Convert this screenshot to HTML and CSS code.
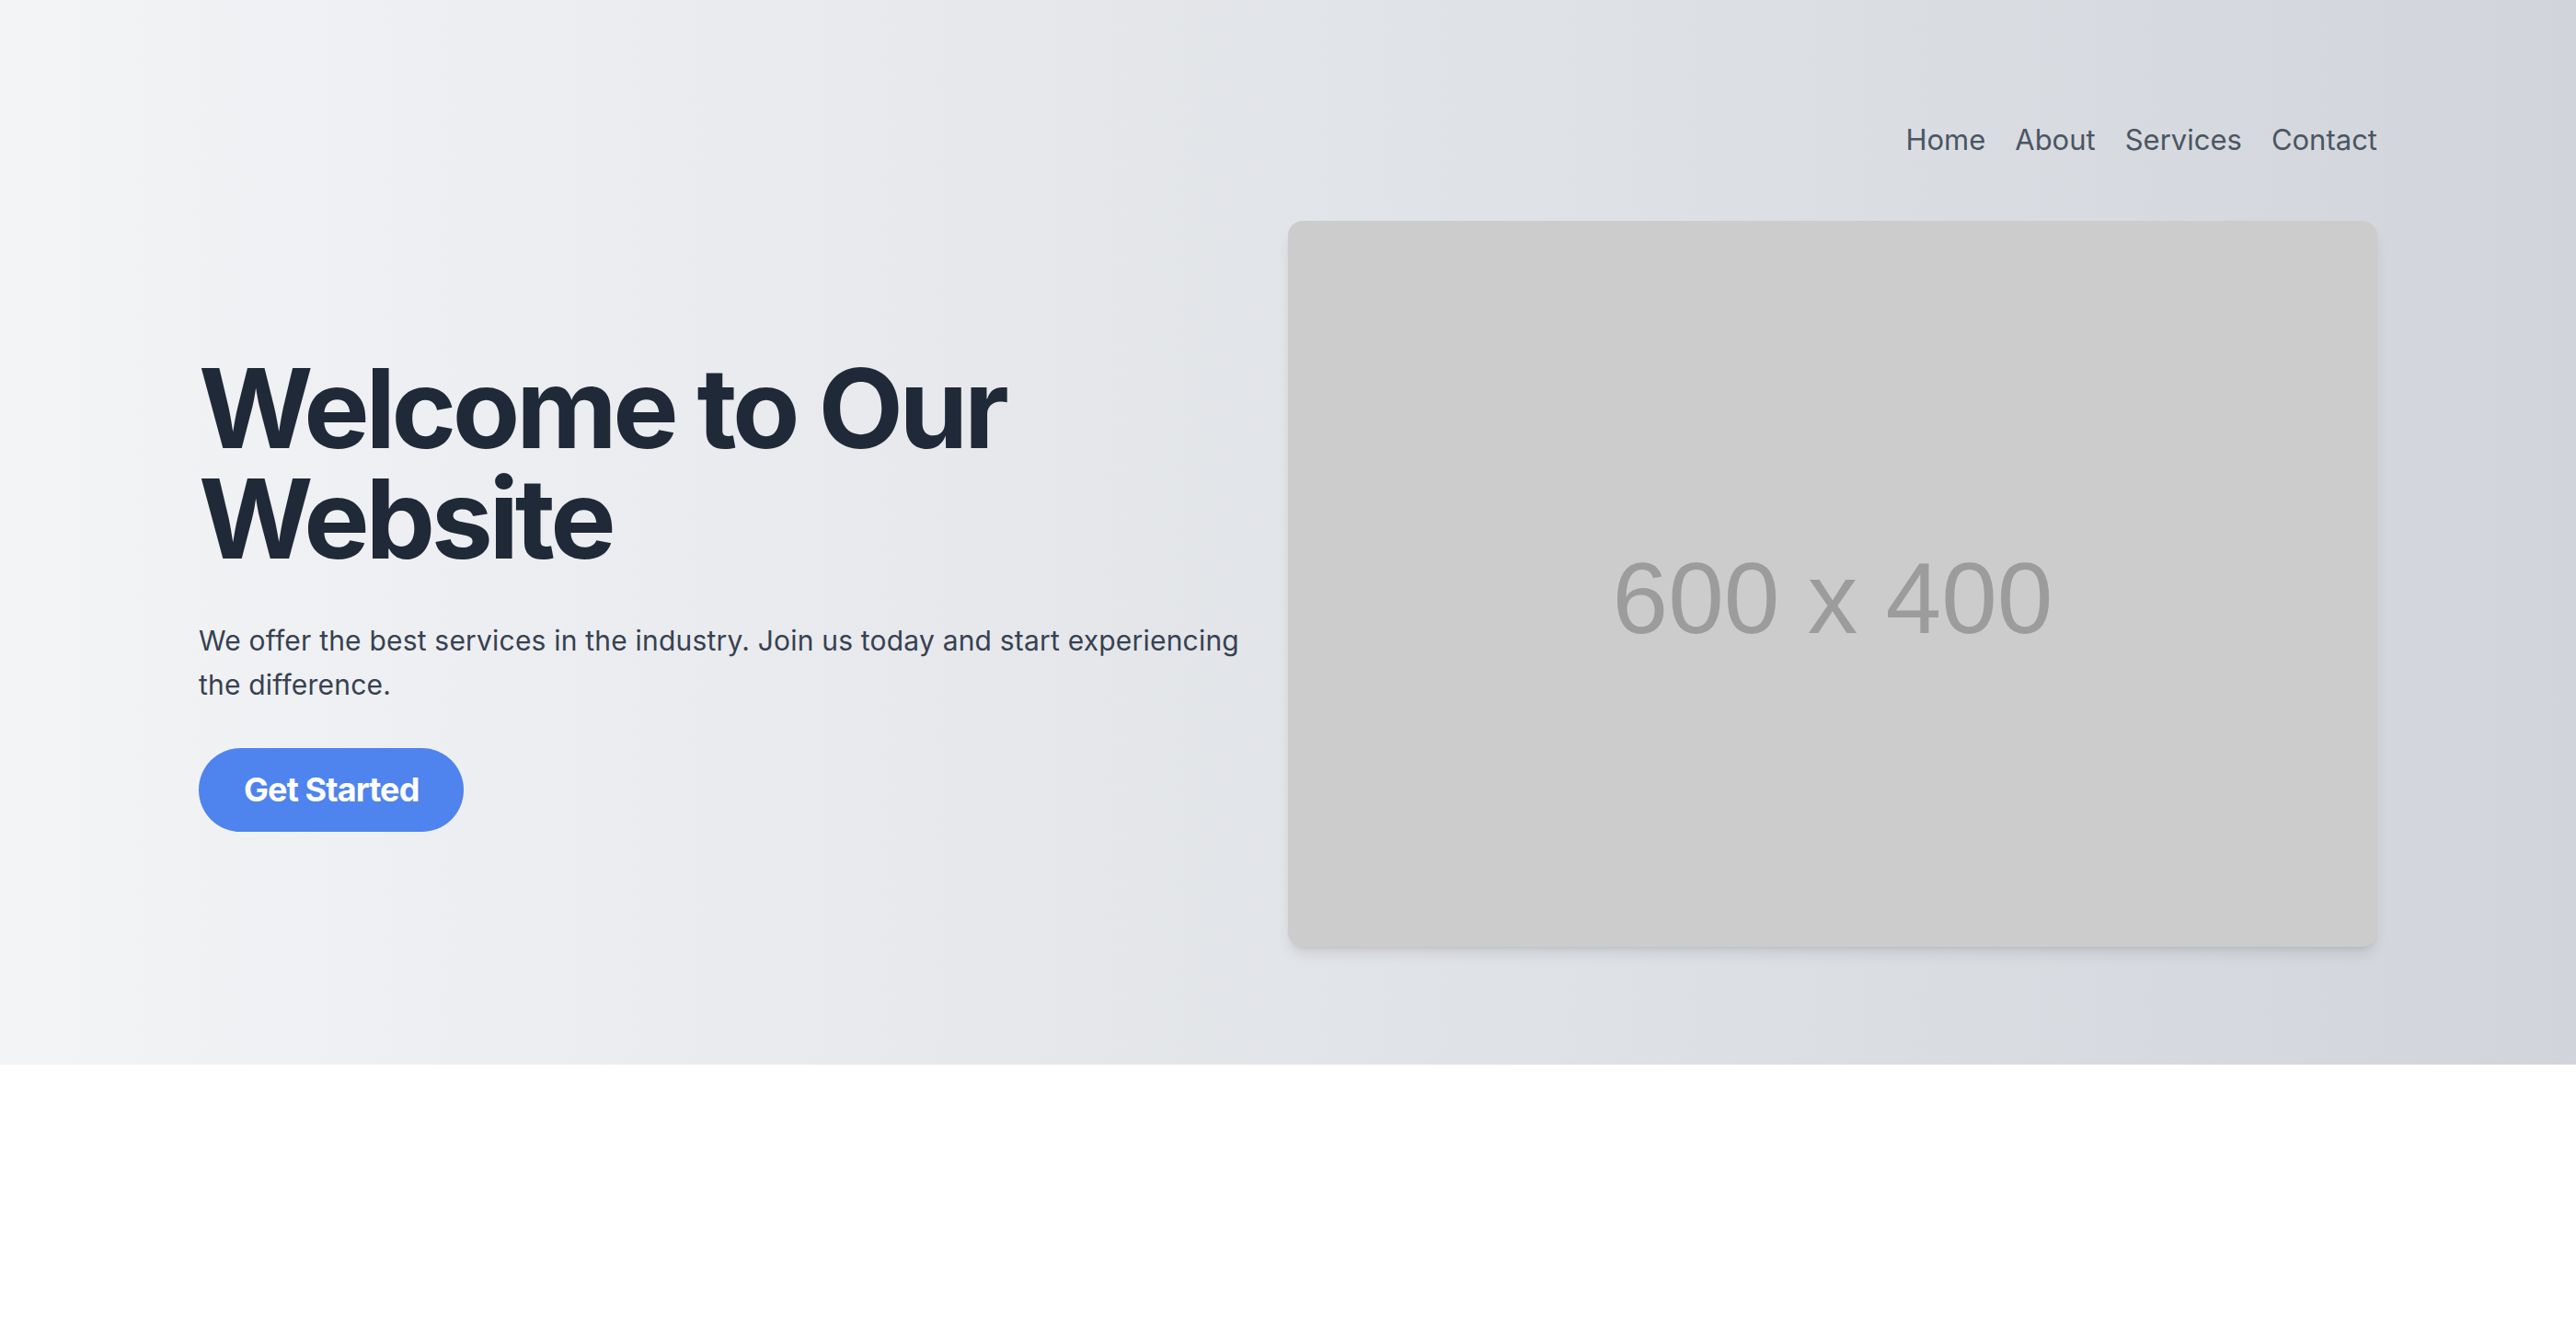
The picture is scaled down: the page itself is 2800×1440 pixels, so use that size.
FILE: index.html
```html
<!DOCTYPE html>
<html lang="en">
<head>
<meta charset="utf-8">
<title>Welcome</title>
<link rel="stylesheet" href="styles.css">
</head>
<body>
<section class="hero">
  <div class="container">
    <nav class="nav">
      <a href="#" class="nav-link">Home</a>
      <a href="#" class="nav-link">About</a>
      <a href="#" class="nav-link">Services</a>
      <a href="#" class="nav-link">Contact</a>
    </nav>
    <div class="hero-row">
      <div class="hero-text">
        <h1 class="hero-title">Welcome to Our Website</h1>
        <p class="hero-lead">We offer the best services in the industry. Join us today and start experiencing the difference.</p>
        <a href="#" class="btn">Get Started</a>
      </div>
      <div class="hero-media">
        <div class="placeholder"><span class="placeholder-label">600 x 400</span></div>
      </div>
    </div>
  </div>
</section>
</body>
</html>
```

FILE: styles.css
```css
* { box-sizing: border-box; }
html, body { margin: 0; padding: 0; }
body {
  font-family: Inter, "Noto Sans", sans-serif;
  background: #ffffff;
  min-height: 1440px;
}
.hero {
  background: linear-gradient(to right, #f3f4f6, #d1d5db);
  padding: 128px 0 128px;
}
.container {
  width: 2368px;
  margin: 0 auto;
}
.nav {
  display: flex;
  justify-content: flex-end;
  gap: 32px;
  height: 48px;
  align-items: center;
  margin-bottom: 64px;
}
.nav-link {
  font-size: 31px;
  line-height: 48px;
  color: #4b5563;
  text-decoration: none;
}
.hero-row {
  display: flex;
  align-items: center;
}
.hero-text {
  width: 50%;
  padding-right: 48px;
  padding-top: 19px;
}
.hero-title {
  margin: 0;
  font-size: 120px;
  line-height: 120px;
  font-weight: 700;
  letter-spacing: -0.036em;
  color: #1f2937;
}
.hero-lead {
  margin: 48px 0 45px;
  font-size: 30px;
  line-height: 48px;
  letter-spacing: 0.2px;
  color: #374151;
}
.btn {
  display: inline-block;
  background: #4f83ee;
  color: #ffffff;
  font-size: 36px;
  line-height: 43px;
  font-weight: 700;
  letter-spacing: -0.025em;
  padding: 24px 49px;
  border-radius: 9999px;
  text-decoration: none;
}
.hero-media {
  width: 50%;
}
.placeholder {
  width: 1184px;
  height: 789px;
  background: #cccccc;
  border-radius: 16px;
  box-shadow: 0 10px 15px -3px rgba(0,0,0,0.1), 0 4px 6px -4px rgba(0,0,0,0.1);
  display: flex;
  align-items: center;
  justify-content: center;
}
.placeholder-label {
  font-family: "Liberation Sans", Arial, sans-serif;
  font-size: 109px;
  color: #9c9c9c;
  padding-top: 30px;
}
```
